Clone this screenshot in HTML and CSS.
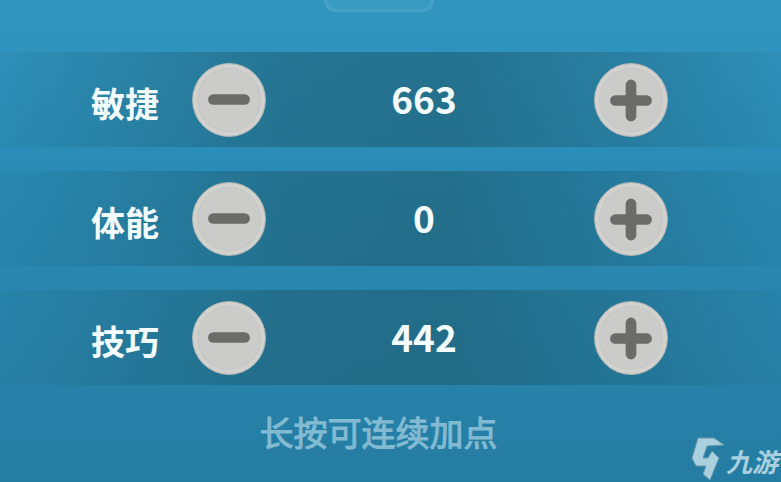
FILE: index.html
```html
<!DOCTYPE html>
<html lang="zh-CN">
<head>
  <meta charset="UTF-8">
  <meta name="viewport" content="width=device-width,initial-scale=1.0">
  <title>属性加点</title>
  <link rel="stylesheet" href="styles.css">
</head>
<body>

<div class="panel">
  <div class="tab"></div>

  <div class="stats">
    <div class="stat" role="group" aria-labelledby="name-agility">
      <span class="stat-name" id="name-agility">敏捷</span>
      <button class="btn" type="button" aria-label="减少敏捷">
        <svg class="icon" viewBox="0 0 74 74"><path d="M21 36.500H53"/></svg>
      </button>
      <output class="stat-value" aria-labelledby="name-agility">663</output>
      <button class="btn" type="button" aria-label="增加敏捷">
        <svg class="icon" viewBox="0 0 74 74"><path d="M21 37.500H53M37 21.500V53.500"/></svg>
      </button>
    </div>

    <div class="stat" role="group" aria-labelledby="name-stamina">
      <span class="stat-name" id="name-stamina">体能</span>
      <button class="btn" type="button" aria-label="减少体能">
        <svg class="icon" viewBox="0 0 74 74"><path d="M21 36.500H53"/></svg>
      </button>
      <output class="stat-value" aria-labelledby="name-stamina">0</output>
      <button class="btn" type="button" aria-label="增加体能">
        <svg class="icon" viewBox="0 0 74 74"><path d="M21 37.500H53M37 21.500V53.500"/></svg>
      </button>
    </div>

    <div class="stat" role="group" aria-labelledby="name-skill">
      <span class="stat-name" id="name-skill">技巧</span>
      <button class="btn" type="button" aria-label="减少技巧">
        <svg class="icon" viewBox="0 0 74 74"><path d="M21 36.500H53"/></svg>
      </button>
      <output class="stat-value" aria-labelledby="name-skill">442</output>
      <button class="btn" type="button" aria-label="增加技巧">
        <svg class="icon" viewBox="0 0 74 74"><path d="M21 37.500H53M37 21.500V53.500"/></svg>
      </button>
    </div>
  </div>

  <p class="hint">长按可连续加点</p>

  <div class="brand">
    <svg class="brand-logo" viewBox="0 0 34 44" aria-hidden="true">
      <path d="M7 1H23L33 8L16 9L12 21H17L21 14L28 21L19 43L12 37L15 29H5L1 21Z"/>
    </svg>
    <span class="brand-name">九游</span>
  </div>
</div>

</body>
</html>
```
FILE: styles.css
```css
* {
  box-sizing: border-box;
}
body {
  margin: 0;
  font-family: "Noto Sans CJK SC", sans-serif;
  color: #f4fdff;
}
.panel {
  position: relative;
  min-height: 100vh;
  background: linear-gradient(#3296c1, #2a8cb6 35%, #2885ad 65%, #257ca2);
  overflow: hidden;
}
.tab {
  width: 110px;
  height: 12px;
  margin: 0 auto;
  border: 3px solid #48a1c8;
  border-top: none;
  border-radius: 0 0 14px 14px;
  background: #3a9bc1;
  transform: translateX(-12px);
}
.stats {
  display: flex;
  flex-direction: column;
  gap: 24px;
  padding-top: 40px;
}
.stat {
  display: flex;
  align-items: center;
  height: 95px;
  padding: 0 113px 0 91px;
  background: linear-gradient(90deg, rgba(30, 92, 112, 0.08) 0, rgba(30, 92, 112, 0.25) 14%, rgba(30, 92, 112, 0.55) 36%, rgba(30, 92, 112, 0.6) 58%, rgba(30, 92, 112, 0.35) 80%, rgba(30, 92, 112, 0.08) 100%);
}
.stat-name {
  width: 101px;
  padding-top: 6px;
  font-size: 34px;
  line-height: 40px;
  font-weight: bold;
}
.stat-value {
  flex: 1;
  padding: 0 12px 4px 0;
  font-size: 37px;
  line-height: 40px;
  font-weight: bold;
  text-align: center;
}
.btn {
  width: 74px;
  height: 74px;
  padding: 0;
  border: 1px solid #a9b4b3;
  border-radius: 50%;
  background: #cbcbca;
  box-shadow: inset 0 0 0 4px #d1d1ce, inset 0 0 0 5px #c5c5c4;
  cursor: pointer;
}
.icon {
  display: block;
  width: 100%;
  height: 100%;
  fill: none;
  stroke: #6b6b6a;
  stroke-width: 11;
  stroke-linecap: round;
}
.hint {
  margin: 0;
  padding: 27px 24px 0 0;
  font-size: 34px;
  line-height: 40px;
  text-align: center;
  color: #82bad2;
  -webkit-text-stroke: 1px #82bad2;
}
.brand {
  position: absolute;
  right: 3px;
  bottom: 1px;
  display: flex;
  align-items: flex-end;
  gap: 1px;
  color: #a9d0df;
}
.brand-logo {
  width: 34px;
  height: 44px;
  fill: #a9d0df;
  stroke: #6b97a8;
  stroke-width: 1;
}
.brand-name {
  padding-bottom: 2px;
  font-size: 26px;
  line-height: 36px;
  font-weight: bold;
  font-style: italic;
}
```
